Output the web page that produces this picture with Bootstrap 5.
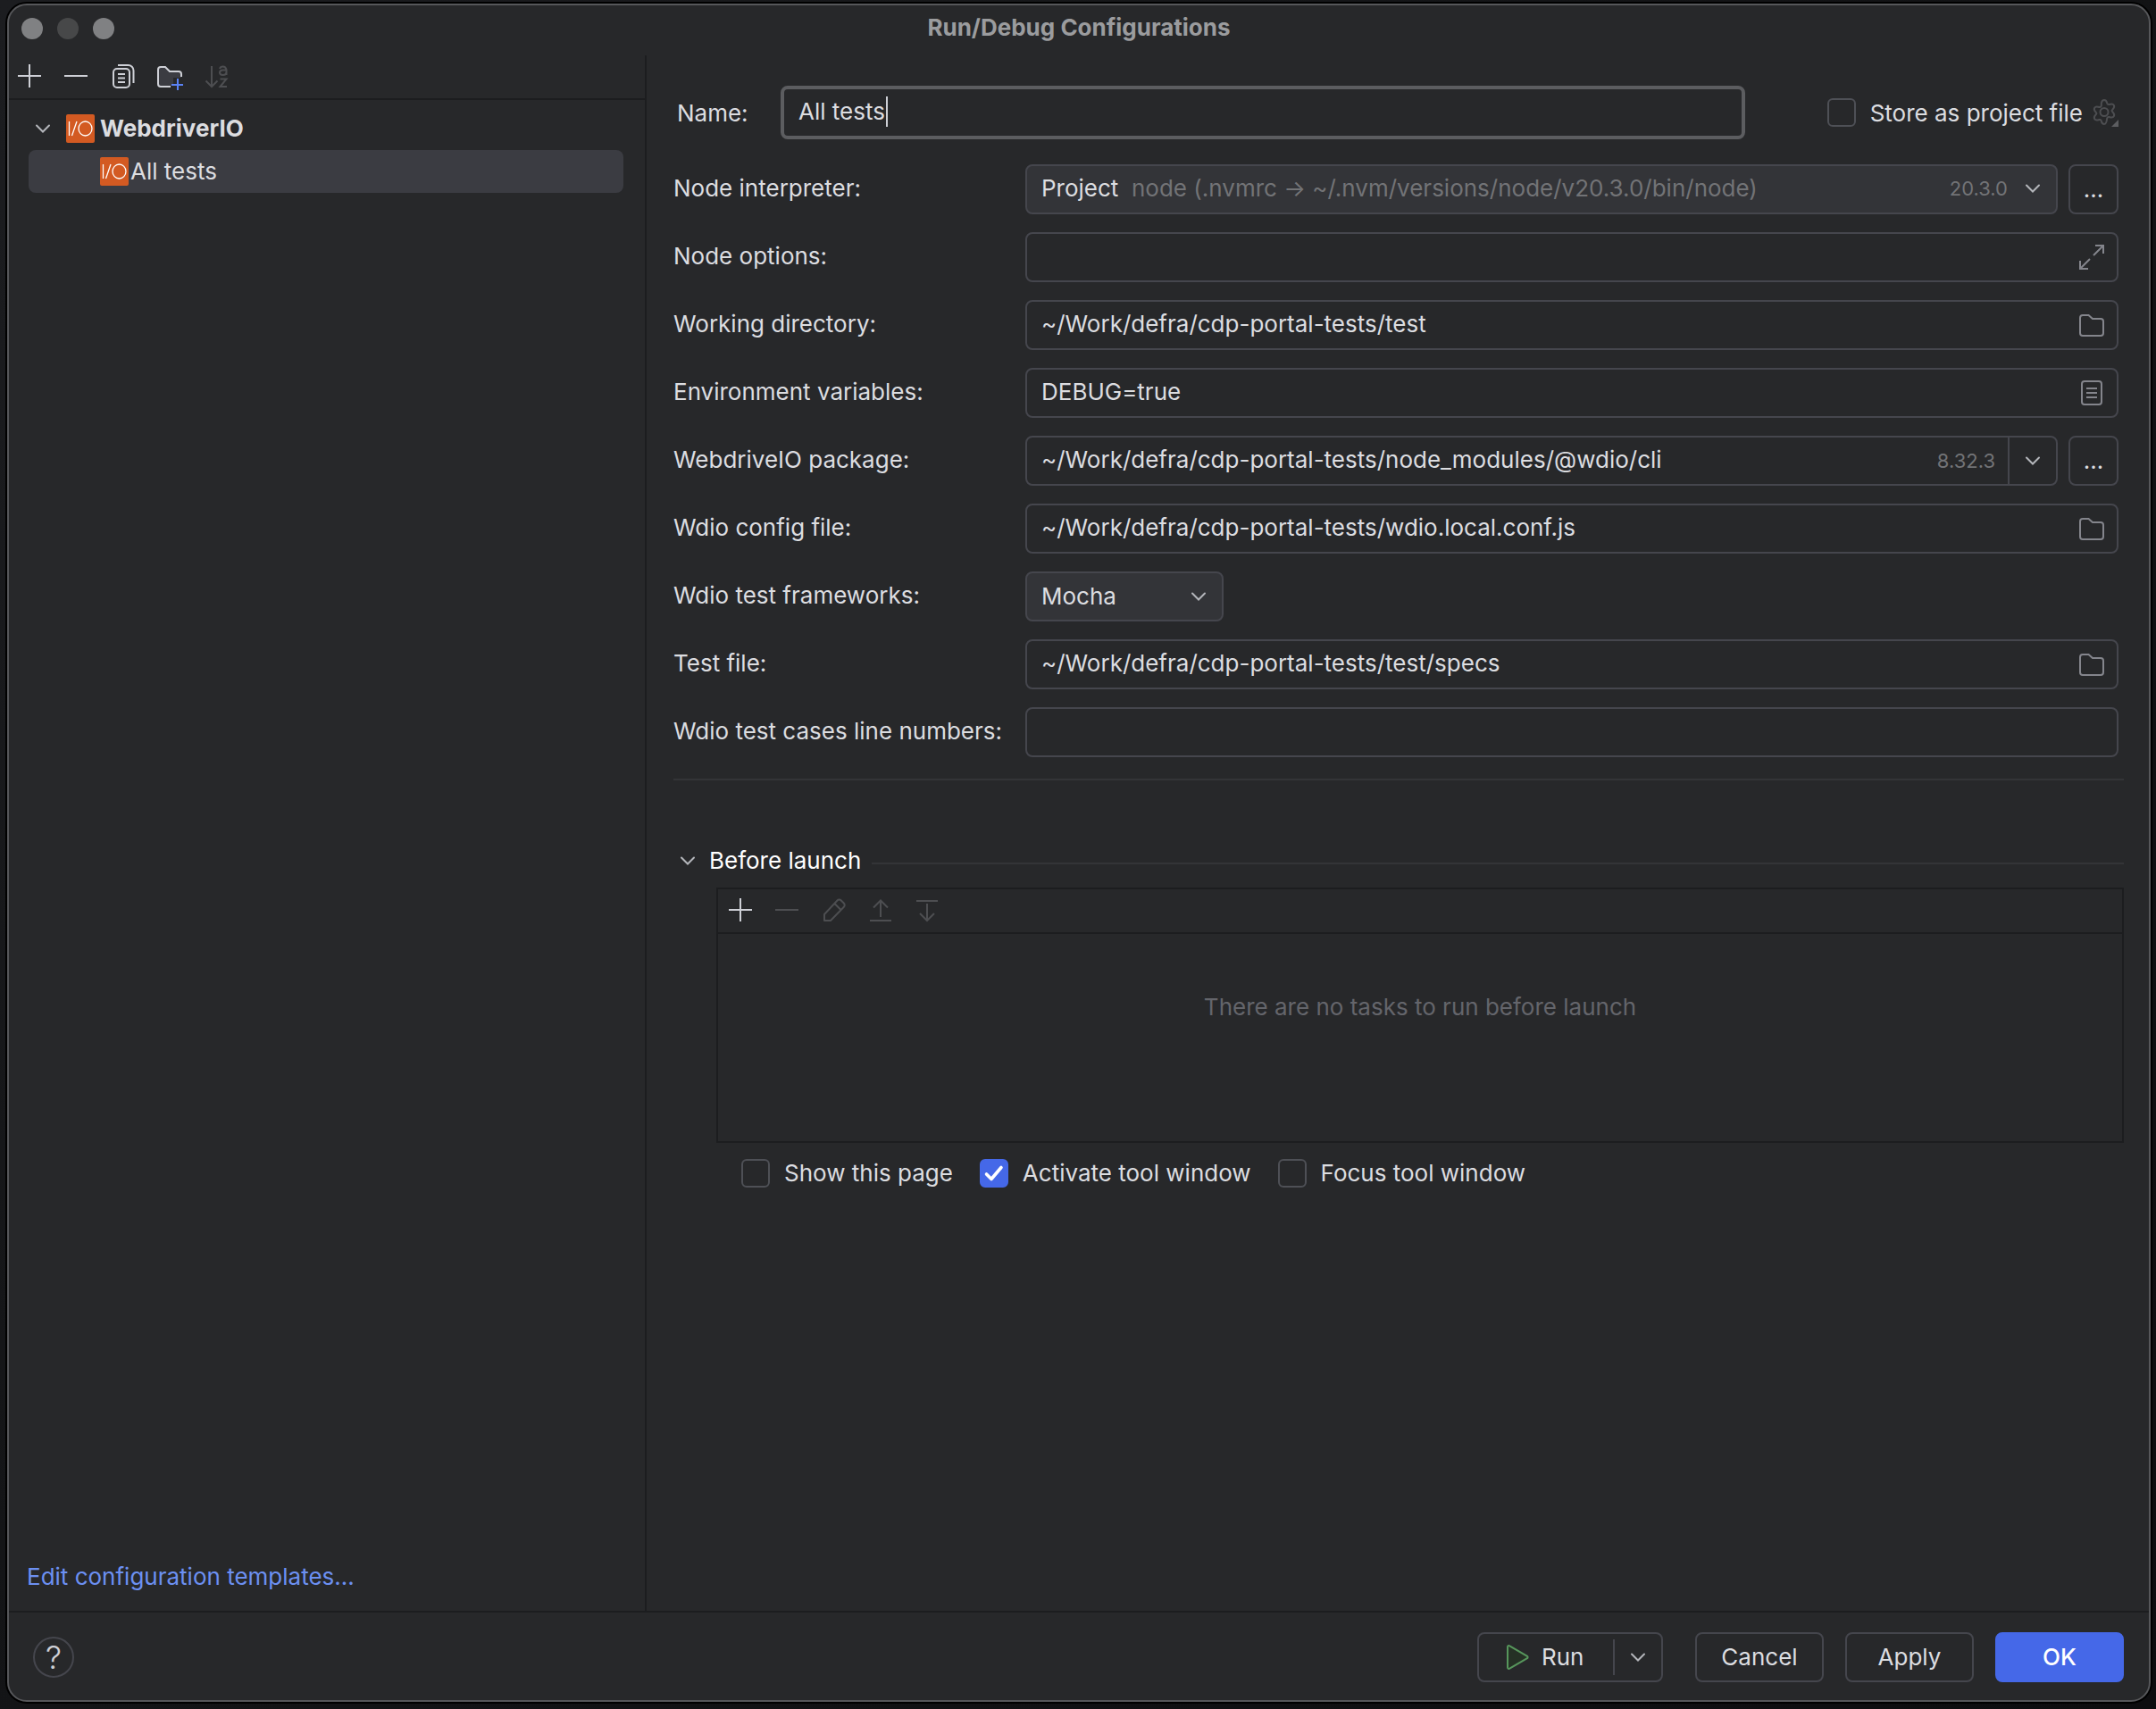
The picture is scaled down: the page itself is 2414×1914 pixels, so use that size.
<!DOCTYPE html>
<html lang="en" data-bs-theme="dark">
<head>
<meta charset="utf-8">
<meta name="viewport" content="width=device-width, initial-scale=1">
<title>Run/Debug Configurations</title>
<link rel="stylesheet" href="https://cdn.jsdelivr.net/npm/bootstrap@5.3.0/dist/css/bootstrap.min.css">
<style>
  :root {
    --win: #27282a;
    --line: #1c1d1f;
    --soft-line: #333437;
    --edge: #45464d;
    --fg: #dcdde0;
    --muted: #727376;
    --icon: #ced0d6;
    --icon-mid: #84858c;
    --icon-off: #4d4e51;
    --accent: #4568e8;
  }
  body {
    min-height: 100vh;
    padding: 4px 6px 8px 8px;
    background: linear-gradient(135deg, #1c1d20 0%, #131416 45%, #0d0d0f 100%);
    color: var(--fg);
    font: 400 26px/32px Inter, "Liberation Sans", sans-serif;
  }
  svg { display: block; flex: none; overflow: visible; fill: none; stroke: currentColor; stroke-width: 2; }
  .ico { width: 32px; height: 32px; }
  .dialog-window {
    background: var(--win);
    border: 2px solid #56575a;
    border-radius: 22px;
    box-shadow: 0 0 0 2px #000;
  }
  .titlebar { height: 56px; padding: 0 14px; }
  .titlebar h1 { font-size: 26px; line-height: 32px; font-weight: 700; color: #9b9c9e; padding-bottom: 6px; }
  .lights { flex: 1 1 0; gap: 16px; padding-bottom: 4px; }
  .light { width: 24px; height: 24px; border-radius: 50%; background: #808183; }
  .light-dim { background: #474849; }

  .sidebar { flex: 0 0 714px; border-right: 2px solid var(--line); }
  .toolstrip { height: 50px; padding: 0 7px 2px; gap: 20px; border-bottom: 2px solid var(--line); }
  .tool { padding: 0; border: 0; background: none; color: var(--icon); }
  .tool:disabled { color: var(--icon-off); }
  .tree { padding: 8px 24px 0 22px; }
  .tree-row { height: 48px; border-radius: 8px; }
  .tree-row.selected { background: #3b3c42; padding-left: 80px; gap: 2px; }
  .tree-group { gap: 6px; font-weight: 700; }
  .tree-group .ico + .ico { margin-left: 4px; }
  .chev { color: #b4b6bb; }
  .edit-link { padding: 0 20px 22px; }
  .edit-link a { color: #6c90f2; text-decoration: none; }

  .editor { padding: 34px 28px 0 30px; }
  .form-area { padding-right: 6px; }
  .name-line { padding-left: 4px; margin-bottom: 28px; }
  .name-line > label { width: 116px; }
  .name-line label { padding-top: 2px; }
  .name-input {
    height: 60px; padding: 0 16px 3px; color: var(--fg); font-size: 26px;
    border: 4px solid #5c5d60; border-radius: 8px;
    background: linear-gradient(#ced0d6, #ced0d6) 114px 8px / 2px 34px no-repeat, var(--win);
  }
  .store { margin-left: 92px; }
  .tick-line { gap: 16px; }
  .form-check-input.tick {
    width: 32px; height: 32px; margin: 0; flex: none;
    background-color: transparent; border: 2px solid #4e5056; border-radius: 6px;
  }
  .form-check-input.tick:checked {
    background-color: var(--accent); border-color: var(--accent);
    background-image: url("data:image/svg+xml,%3Csvg xmlns='http://www.w3.org/2000/svg' viewBox='0 0 28 28'%3E%3Cpath d='M5.500 15l5.500 5.500L22 7.500' fill='none' stroke='%23fff' stroke-width='3.600' stroke-linecap='round' stroke-linejoin='round'/%3E%3C/svg%3E");
  }
  .fields { gap: 20px; }
  .field-line > label { flex: 0 0 394px; padding-bottom: 2px; }
  .box { height: 56px; border: 2px solid var(--edge); border-radius: 8px; min-width: 0; }
  .box input, .box select {
    appearance: none; min-width: 0; height: 52px; padding: 0 0 3px 16px;
    border: 0; background: none; color: var(--fg); outline: 0;
  }
  .box .tool { color: var(--icon-mid); margin-right: 12px; }
  .box-filled { background: #333438; }
  .box option { background: #333438; }
  .box-narrow select { padding-bottom: 0; }
  .hint { pointer-events: none; padding: 0 10px 3px 117px; color: var(--muted); }
  .version { font-size: 22px; color: var(--muted); }
  .hint .version { margin-right: 12px; }
  .box .drop { border-left: 2px solid var(--edge); width: 54px; margin: 0 0 0 14px; color: #b4b6bb; align-self: stretch; }
  .box-narrow { width: 222px; }
  .chev-over { pointer-events: none; right: 10px; top: 10px; }
  .push {
    height: 56px; border: 2px solid var(--edge); border-radius: 8px;
    color: var(--fg); font-size: 26px; line-height: 32px; padding: 0;
  }
  .push-dots { width: 56px; margin-left: 12px; }
  .push-wide { width: 144px; }
  .push-ok { background: var(--accent); border-color: var(--accent); color: #fff; font-weight: 500; }
  .rule { height: 2px; background: var(--soft-line); }
  .form-rule { margin-top: 24px; }

  .before { margin-top: 70px; height: 40px; gap: 8px; }
  .before h2 { font-size: 26px; line-height: 32px; font-weight: 400; }
  .before .rule { margin: 6px 0 0 4px; }
  .task-panel { margin: 10px 0 0 48px; border: 2px solid var(--line); }
  .task-panel .toolstrip { padding-left: 9px; }
  .task-panel p { height: 232px; padding-top: 66px; color: #64656b; }
  .options { margin: 18px 0 0 76px; gap: 30px; }

  .footer-bar { border-top: 2px solid var(--line); padding: 22px 28px 20px 27px; gap: 24px; }
  .help { width: 46px; height: 46px; border: 2px solid var(--edge); border-radius: 50%; font-size: 36px; font-weight: 300; line-height: 40px; padding: 0; background: none; color: var(--icon); }
  .run-split { margin-right: 12px; border: 2px solid var(--edge); border-radius: 8px; height: 56px; }
  .run-split button { border: 0; background: none; color: var(--fg); padding: 0; }
  .run-main { width: 150px; gap: 11px; padding-left: 27px !important; }
  .run-sep { width: 2px; height: 40px; background: var(--edge); }
  .run-more { width: 52px; padding-left: 10px !important; }
</style>
</head>
<body class="d-flex">

<svg width="0" height="0" class="position-absolute" aria-hidden="true">
  <symbol id="i-plus" viewBox="0 0 32 32"><path d="M16 3v26M3 16h26"/></symbol>
  <symbol id="i-minus" viewBox="0 0 32 32"><path d="M3 16h26"/></symbol>
  <symbol id="i-chev" viewBox="0 0 32 32"><path d="M9 12.500l7 7 7-7" stroke-linecap="round"/></symbol>
  <symbol id="i-copy" viewBox="0 0 32 32"><rect x="6" y="8" width="18" height="21" rx="4"/><path d="M11 4h11.500a6 6 0 0 1 6 6v14M11 14h8M11 18.500h8M11 23h8"/></symbol>
  <symbol id="i-newfolder" viewBox="0 0 32 32"><path d="M4 26V9a3 3 0 0 1 3-3h5.500l5 5H27a3 3 0 0 1 3 3v4h-9v9H7a3 3 0 0 1-3-3z" fill="#3b3c42" stroke="none"/><path d="M18 28H7a3 3 0 0 1-3-3V9a3 3 0 0 1 3-3h5l5 5h10a3 3 0 0 1 3 3v3"/><path d="M26 19v14M19 26h14" stroke="#5a82f5"/></symbol>
  <symbol id="i-wdio" viewBox="0 0 32 32"><rect width="32" height="32" rx="2" fill="#d35a22" stroke="none"/><path d="M3.500 8v16M6.500 24L12 8" stroke="#fff" stroke-width="1.300"/><ellipse cx="21.500" cy="16" rx="7.500" ry="8" stroke="#fff" stroke-width="1.300"/></symbol>
  <symbol id="i-gear" viewBox="0 0 32 32"><path d="M12.800 5.500Q13.500 2 16 2t3.200 3.500q.5 1.800 2.300 1.500 4-1.500 5.300.7t-1.500 5q-1.400 1.300 0 2.600 2.800 2.800 1.500 5t-5.300.7q-1.800-.3-2.300 1.500Q18.500 29 16 29t-3.200-3.500q-.5-1.800-2.300-1.500-4 1.500-5.300-.7t1.500-5q1.400-1.300 0-2.600-2.800-2.800-1.500-5t5.300-.7q1.800.3 2.300-1.500z" stroke-linejoin="round"/><circle cx="16" cy="15.500" r="4.500"/><path d="M32 24v8h-8z" fill="#5c5d60" stroke="none"/></symbol>
  <symbol id="i-expand" viewBox="0 0 32 32"><path d="M20 3h9v9M29 3L18 14M3 20v9h9M3 29l11-11"/></symbol>
  <symbol id="i-folder" viewBox="0 0 32 32"><path d="M3 8a3 3 0 0 1 3-3h6.500l4.500 4h9a3 3 0 0 1 3 3v13a3 3 0 0 1-3 3H6a3 3 0 0 1-3-3z"/></symbol>
  <symbol id="i-list" viewBox="0 0 32 32"><rect x="5" y="3" width="22" height="26" rx="3"/><path d="M10 11h12M10 16h12M10 21h12"/></symbol>
  <symbol id="i-pencil" viewBox="0 0 32 32"><path d="M6 28v-7L20.500 5.500a3 3 0 0 1 4.300 0l3 3a3 3 0 0 1 0 4.300L13 28zM17.500 9l7 7" stroke-linejoin="round"/></symbol>
  <symbol id="i-up" viewBox="0 0 32 32"><path d="M5 28h24M17 24V6M9 13.500L17 5.500l8 8"/></symbol>
  <symbol id="i-down" viewBox="0 0 32 32"><path d="M5 6h24M17 9v18M9 20l8 8 8-8"/></symbol>
  <symbol id="i-play" viewBox="0 0 32 32"><path d="M5 4.500v23a1.500 1.500 0 0 0 2.300 1.200L27 17.200a1.500 1.500 0 0 0 0-2.400L7.300 3.300A1.500 1.500 0 0 0 5 4.500z" fill="#253125" stroke="#57965c"/></symbol>
</svg>

<main class="dialog-window flex-grow-1 d-flex flex-column">
  <header class="titlebar d-flex align-items-center">
    <div class="lights d-flex"><span class="light"></span><span class="light light-dim"></span><span class="light"></span></div>
    <h1 class="m-0">Run/Debug Configurations</h1>
    <div class="lights"></div>
  </header>

  <div class="flex-grow-1 d-flex">
    <aside class="sidebar d-flex flex-column">
      <div class="toolstrip d-flex align-items-center">
        <button class="tool" aria-label="Add"><svg class="ico"><use href="#i-plus"/></svg></button>
        <button class="tool" aria-label="Remove"><svg class="ico"><use href="#i-minus"/></svg></button>
        <button class="tool" aria-label="Copy"><svg class="ico"><use href="#i-copy"/></svg></button>
        <button class="tool" aria-label="New folder"><svg class="ico"><use href="#i-newfolder"/></svg></button>
        <button class="tool" aria-label="Sort" disabled>
          <svg class="ico" viewBox="0 0 32 32">
            <path d="M12 5v23M5.500 21.500L12 28l6.500-6.500"/>
            <path d="M21 8q.8-2.500 3.700-2.500T28.500 9v6M28.500 9.500h-3.800q-3.700.2-3.700 2.800T24.500 15t4-2.700M21.500 19.500h7l-7 8.500h7.500"/>
          </svg>
        </button>
      </div>
      <div class="tree flex-grow-1">
        <div class="tree-row tree-group d-flex align-items-center">
          <svg class="ico chev"><use href="#i-chev"/></svg>
          <svg class="ico"><use href="#i-wdio"/></svg>
          <span>WebdriverIO</span>
        </div>
        <div class="tree-row selected d-flex align-items-center">
          <svg class="ico"><use href="#i-wdio"/></svg>
          <span>All tests</span>
        </div>
      </div>
      <div class="edit-link"><a href="#">Edit configuration templates...</a></div>
    </aside>

    <section class="editor flex-grow-1">
      <form class="form-area">
        <div class="name-line d-flex align-items-center">
          <label for="name">Name:</label>
          <input id="name" class="name-input flex-grow-1" type="text" value="All tests">
          <div class="store d-flex align-items-center">
            <div class="tick-line d-flex align-items-center">
              <input class="form-check-input tick" type="checkbox" id="store">
              <label for="store">Store as project file</label>
            </div>
            <button type="button" class="tool ms-2" aria-label="Storage settings" disabled><svg class="ico"><use href="#i-gear"/></svg></button>
          </div>
        </div>

        <div class="fields d-flex flex-column">
          <div class="field-line d-flex align-items-center">
            <label for="interp">Node interpreter:</label>
            <div class="box box-filled position-relative flex-grow-1">
              <select id="interp" class="w-100"><option>Project</option></select>
              <div class="hint position-absolute top-0 start-0 w-100 h-100 d-flex align-items-center">
                <span class="flex-grow-1">node (.nvmrc → ~/.nvm/versions/node/v20.3.0/bin/node)</span>
                <span class="version">20.3.0</span>
                <svg class="ico chev"><use href="#i-chev"/></svg>
              </div>
            </div>
            <button type="button" class="btn push push-dots" aria-label="Browse interpreters">...</button>
          </div>
          <div class="field-line d-flex align-items-center">
            <label for="opts">Node options:</label>
            <div class="box flex-grow-1 d-flex align-items-center">
              <input id="opts" class="flex-grow-1" type="text">
              <button type="button" class="tool" aria-label="Expand"><svg class="ico"><use href="#i-expand"/></svg></button>
            </div>
          </div>
          <div class="field-line d-flex align-items-center">
            <label for="dir">Working directory:</label>
            <div class="box flex-grow-1 d-flex align-items-center">
              <input id="dir" class="flex-grow-1" type="text" value="~/Work/defra/cdp-portal-tests/test">
              <button type="button" class="tool" aria-label="Browse"><svg class="ico"><use href="#i-folder"/></svg></button>
            </div>
          </div>
          <div class="field-line d-flex align-items-center">
            <label for="env">Environment variables:</label>
            <div class="box flex-grow-1 d-flex align-items-center">
              <input id="env" class="flex-grow-1" type="text" value="DEBUG=true">
              <button type="button" class="tool" aria-label="Edit variables"><svg class="ico"><use href="#i-list"/></svg></button>
            </div>
          </div>
          <div class="field-line d-flex align-items-center">
            <label for="pkg">WebdriveIO package:</label>
            <div class="box flex-grow-1 d-flex align-items-center">
              <input id="pkg" class="flex-grow-1" type="text" value="~/Work/defra/cdp-portal-tests/node_modules/@wdio/cli">
              <span class="version">8.32.3</span>
              <button type="button" class="tool drop d-flex align-items-center justify-content-center" aria-label="Choose package"><svg class="ico"><use href="#i-chev"/></svg></button>
            </div>
            <button type="button" class="btn push push-dots" aria-label="Browse packages">...</button>
          </div>
          <div class="field-line d-flex align-items-center">
            <label for="conf">Wdio config file:</label>
            <div class="box flex-grow-1 d-flex align-items-center">
              <input id="conf" class="flex-grow-1" type="text" value="~/Work/defra/cdp-portal-tests/wdio.local.conf.js">
              <button type="button" class="tool" aria-label="Browse"><svg class="ico"><use href="#i-folder"/></svg></button>
            </div>
          </div>
          <div class="field-line d-flex align-items-center">
            <label for="fw">Wdio test frameworks:</label>
            <div class="box box-filled box-narrow position-relative">
              <select id="fw" class="w-100"><option>Mocha</option></select>
              <svg class="ico chev chev-over position-absolute"><use href="#i-chev"/></svg>
            </div>
          </div>
          <div class="field-line d-flex align-items-center">
            <label for="file">Test file:</label>
            <div class="box flex-grow-1 d-flex align-items-center">
              <input id="file" class="flex-grow-1" type="text" value="~/Work/defra/cdp-portal-tests/test/specs">
              <button type="button" class="tool" aria-label="Browse"><svg class="ico"><use href="#i-folder"/></svg></button>
            </div>
          </div>
          <div class="field-line d-flex align-items-center">
            <label for="lines">Wdio test cases line numbers:</label>
            <div class="box flex-grow-1 d-flex"><input id="lines" class="flex-grow-1" type="text"></div>
          </div>
        </div>
      </form>
      <div class="rule form-rule"></div>

      <div class="before d-flex align-items-center">
        <svg class="ico chev"><use href="#i-chev"/></svg>
        <h2 class="m-0">Before launch</h2>
        <div class="rule flex-grow-1"></div>
      </div>
      <div class="task-panel">
        <div class="toolstrip d-flex align-items-center">
          <button class="tool" aria-label="Add task"><svg class="ico"><use href="#i-plus"/></svg></button>
          <button class="tool" aria-label="Remove task" disabled><svg class="ico"><use href="#i-minus"/></svg></button>
          <button class="tool" aria-label="Edit task" disabled><svg class="ico"><use href="#i-pencil"/></svg></button>
          <button class="tool" aria-label="Move up" disabled><svg class="ico"><use href="#i-up"/></svg></button>
          <button class="tool" aria-label="Move down" disabled><svg class="ico"><use href="#i-down"/></svg></button>
        </div>
        <p class="m-0 text-center">There are no tasks to run before launch</p>
      </div>
      <div class="options d-flex">
        <div class="tick-line d-flex align-items-center">
          <input class="form-check-input tick" type="checkbox" id="show">
          <label for="show">Show this page</label>
        </div>
        <div class="tick-line d-flex align-items-center">
          <input class="form-check-input tick" type="checkbox" id="activate" checked>
          <label for="activate">Activate tool window</label>
        </div>
        <div class="tick-line d-flex align-items-center">
          <input class="form-check-input tick" type="checkbox" id="focus">
          <label for="focus">Focus tool window</label>
        </div>
      </div>
    </section>
  </div>

  <footer class="footer-bar d-flex align-items-center">
    <button class="help me-auto" aria-label="Help">?</button>
    <div class="run-split d-flex align-items-center">
      <button class="run-main d-flex align-items-center"><svg class="ico"><use href="#i-play"/></svg><span>Run</span></button>
      <span class="run-sep"></span>
      <button class="run-more" aria-label="More run options"><svg class="ico chev"><use href="#i-chev"/></svg></button>
    </div>
    <button class="btn push push-wide">Cancel</button>
    <button class="btn push push-wide">Apply</button>
    <button class="btn push push-wide push-ok">OK</button>
  </footer>
</main>

<script src="https://cdn.jsdelivr.net/npm/bootstrap@5.3.0/dist/js/bootstrap.bundle.min.js"></script>
</body>
</html>
